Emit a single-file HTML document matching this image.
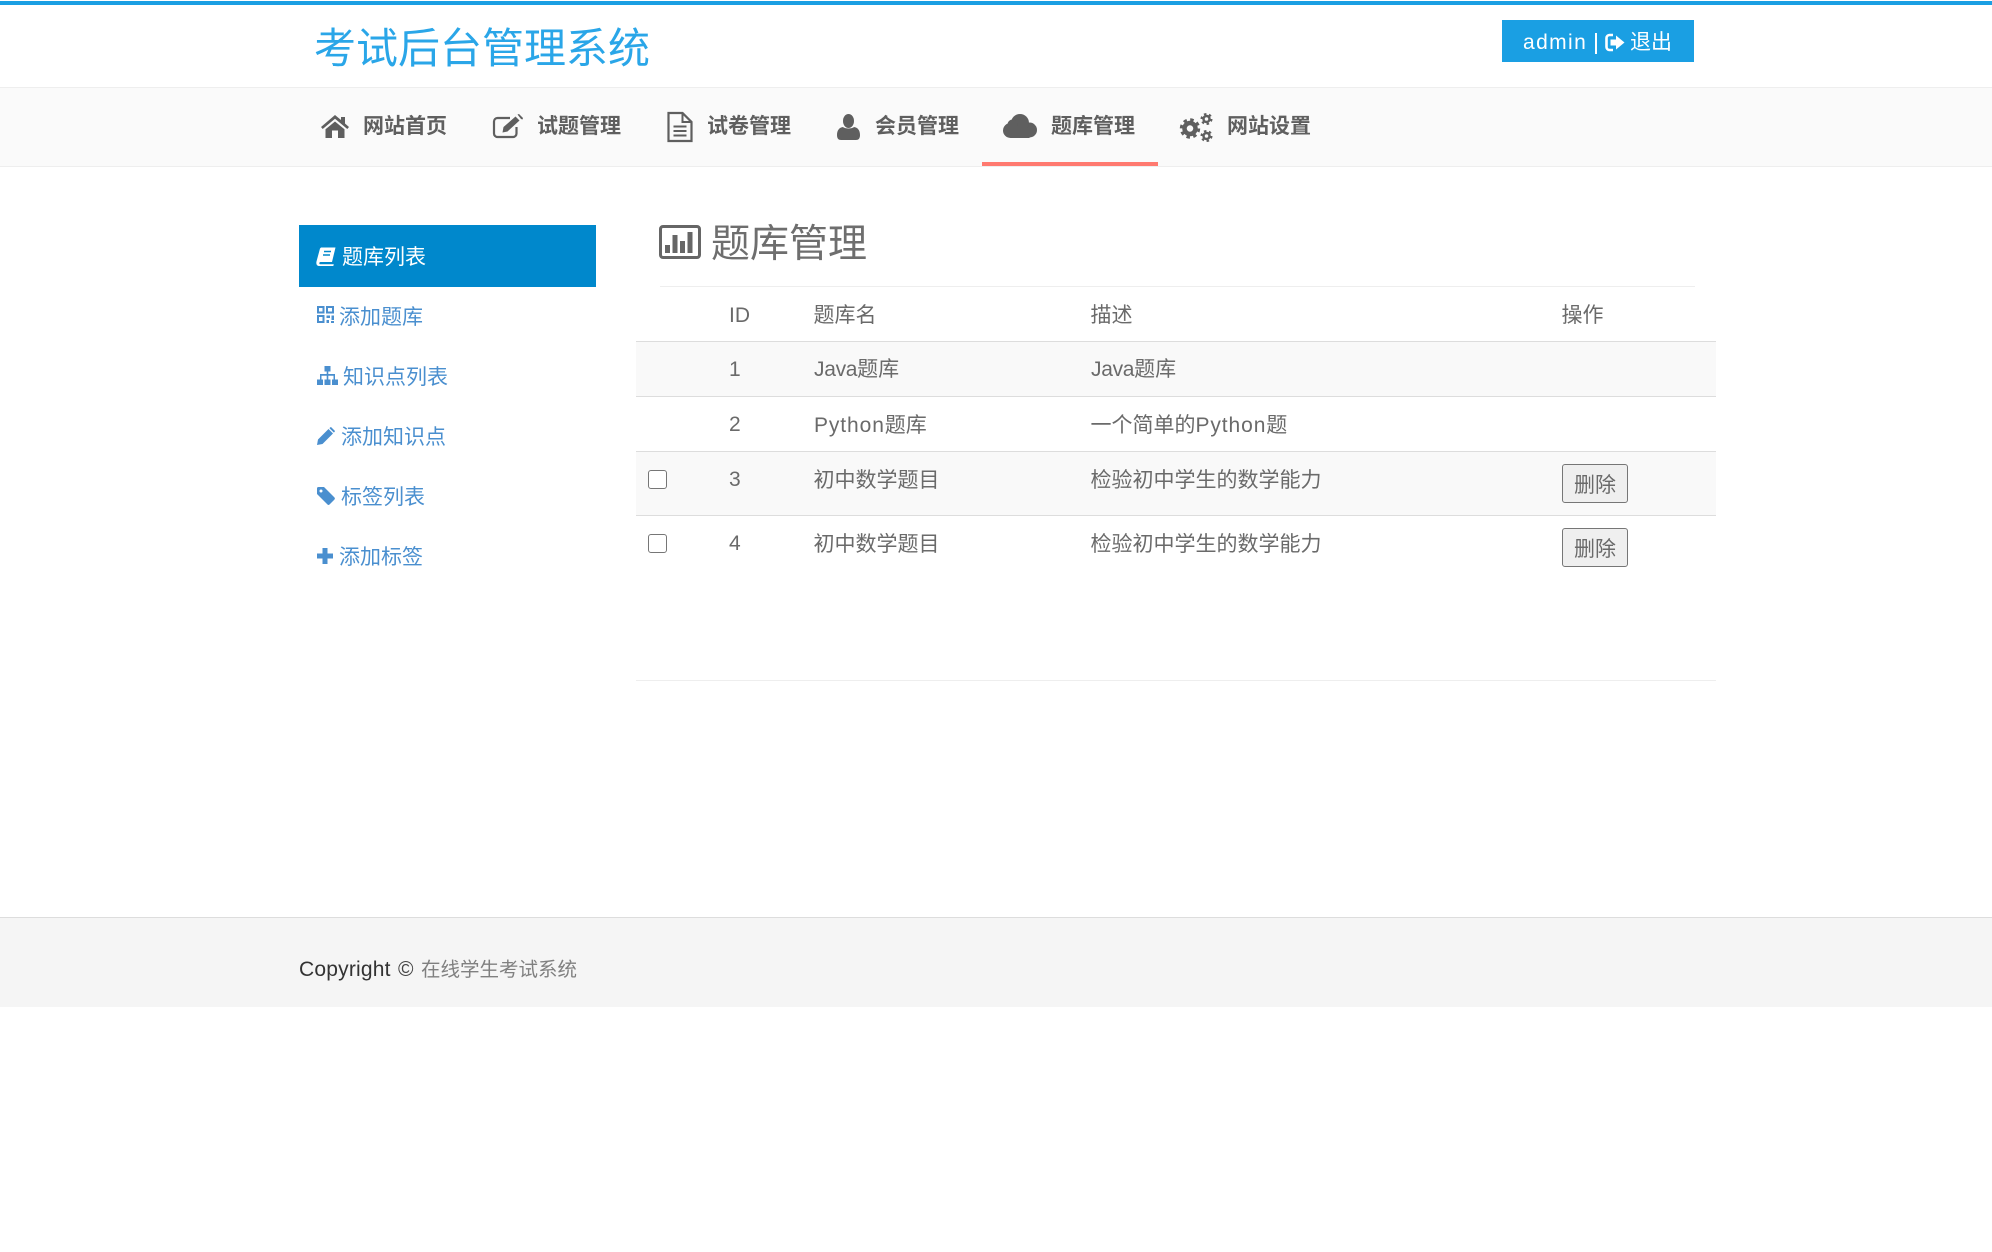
<!DOCTYPE html>
<html lang="zh-CN">
<head>
<meta charset="utf-8">
<title>考试后台管理系统</title>
<style>
html,body{margin:0;padding:0;background:#fff;}
body{position:relative;width:1992px;height:1252px;overflow:hidden;font-family:"Liberation Sans","Noto Sans CJK SC",sans-serif;font-size:21px;color:#6a6a6a;}
.a{position:absolute;}
.t{position:absolute;white-space:nowrap;line-height:30px;height:30px;}
.side{color:#4a8fcf;}
.nav{font-weight:bold;color:#5f5f5f;}
svg{position:absolute;display:block;overflow:visible;}
.cb{position:absolute;width:17px;height:17px;border:1.5px solid #767676;border-radius:3px;background:#fff;}
.btn{position:absolute;width:64px;height:37px;border:1.5px solid #767676;border-radius:3px;background:#efefef;color:#6a6a6a;line-height:41px;text-align:center;}
</style>
</head>
<body>
<div class="a" style="left:0;top:1px;width:1992px;height:4px;background:#1a9fe3;"></div>
<div class="t" style="left:314px;top:24px;height:50px;line-height:50px;font-size:42px;color:#2aa6e8;">考试后台管理系统</div>
<div class="a" style="left:1502px;top:20px;width:192px;height:42px;background:#1a9fe3;"></div>
<div class="t" style="left:1523px;top:28px;color:#fff;letter-spacing:1.400px;">admin</div>
<div class="a" style="left:1595px;top:33px;width:1.500px;height:21px;background:#fff;"></div>
<svg style="left:1605px;top:33px;" width="20" height="19" viewBox="0 0 20 19"><path d="M8 2H4.500A3 3 0 0 0 1.500 5V14A3 3 0 0 0 4.500 17H8" fill="none" stroke="#fff" stroke-width="2.600"/><path d="M11 2.500L19.500 9.500L11 16.500V12.500H5.500V6.500H11Z" fill="#fff"/></svg>
<div class="t" style="left:1630px;top:28px;color:#fff;">退出</div>

<div class="a" style="left:0;top:87px;width:1992px;height:80px;background:#fafafa;border-top:1px solid #eee;border-bottom:1px solid #eee;box-sizing:border-box;"></div>
<div class="a" style="left:982px;top:162px;width:176px;height:4px;background:#ff7a70;"></div>

<svg style="left:321px;top:115px;" width="28" height="23" viewBox="0 0 28 23"><path d="M14 0L20 5V2H24V8.500L28 12L26.300 14L14 3.800L1.700 14L0 12Z" fill="#5f5f5f"/><path d="M14 6.500L23.500 14.300V23H17V15.500H11V23H4.500V14.300Z" fill="#5f5f5f"/></svg>
<div class="t nav" style="left:363px;top:112px;">网站首页</div>

<svg style="left:493px;top:114px;" width="31" height="24" viewBox="0 0 31 24"><path d="M17 4H4.500A3.500 3.500 0 0 0 1 7.500V19.500A3.500 3.500 0 0 0 4.500 23H20A3.500 3.500 0 0 0 23.500 19.500V13" fill="none" stroke="#5f5f5f" stroke-width="2.200"/><path d="M9.500 18.500L10.500 13L22.500 2.500L26.500 6.500L14.500 17.500Z" fill="#5f5f5f"/><path d="M24.500 0.500L26 0L30 4L29.500 5.500L28 5Z" fill="#5f5f5f"/></svg>
<div class="t nav" style="left:537px;top:112px;">试题管理</div>

<svg style="left:667px;top:112px;" width="26" height="30" viewBox="0 0 26 30"><path d="M1.500 1H15.500L24.500 10V29H1.500Z" fill="none" stroke="#5f5f5f" stroke-width="2.200"/><path d="M15.500 1V10H24.500" fill="none" stroke="#5f5f5f" stroke-width="2"/><path d="M6.500 14.500H19.500M6.500 19H19.500M6.500 23.500H19.500" stroke="#5f5f5f" stroke-width="2"/></svg>
<div class="t nav" style="left:707px;top:112px;">试卷管理</div>

<svg style="left:836px;top:114px;" width="25" height="26" viewBox="0 0 25 26"><ellipse cx="12.500" cy="7" rx="5.500" ry="7" fill="#5f5f5f"/><path d="M1 21C1 16 3.500 13.500 7 13C9 15 16 15 18 13C21.500 13.500 24 16 24 21C24 24.500 22.500 26 20 26H5C2.500 26 1 24.500 1 21Z" fill="#5f5f5f"/></svg>
<div class="t nav" style="left:875px;top:112px;">会员管理</div>

<svg style="left:1003px;top:114px;" width="34" height="24" viewBox="0 0 34 24" fill="#5f5f5f"><circle cx="7.500" cy="16.500" r="7.500"/><circle cx="26.500" cy="16" r="7.500"/><circle cx="17" cy="9" r="9"/><circle cx="9.500" cy="10.500" r="5"/><rect x="7.500" y="14" width="19" height="10"/></svg>
<div class="t nav" style="left:1051px;top:112px;">题库管理</div>

<svg style="left:1180px;top:113px;" width="34" height="30" viewBox="0 0 34 30">
<circle cx="10" cy="15.500" r="5.500" fill="none" stroke="#5f5f5f" stroke-width="4.500"/>
<circle cx="10" cy="15.500" r="8.800" fill="none" stroke="#5f5f5f" stroke-width="2.800" stroke-dasharray="3.500 3.400"/>
<circle cx="26.500" cy="6" r="3" fill="none" stroke="#5f5f5f" stroke-width="2.500"/>
<circle cx="26.500" cy="6" r="5" fill="none" stroke="#5f5f5f" stroke-width="2" stroke-dasharray="2.500 2.700"/>
<circle cx="26.500" cy="23" r="3" fill="none" stroke="#5f5f5f" stroke-width="2.500"/>
<circle cx="26.500" cy="23" r="5" fill="none" stroke="#5f5f5f" stroke-width="2" stroke-dasharray="2.500 2.700"/>
</svg>
<div class="t nav" style="left:1227px;top:112px;">网站设置</div>

<!-- sidebar -->
<div class="a" style="left:299px;top:225px;width:297px;height:62px;background:#0088cc;"></div>
<svg style="left:316px;top:247px;" width="20" height="19" viewBox="0 0 20 19"><path d="M5 0.500H19.500L16 15H4.500C3 15 2.800 17.300 4.500 17.300H17.800L17.300 19H3.500C0.500 19 0 16.500 0.500 14.500L4 1.500Z" fill="#fff"/><path d="M8 4.500H15M7 8H14" stroke="#0088cc" stroke-width="1.600"/></svg>
<div class="t" style="left:342px;top:243px;color:#fff;">题库列表</div>

<svg style="left:317px;top:306px;" width="17" height="17" viewBox="0 0 17 17" fill="none" stroke="#4a8fcf"><rect x="1" y="1" width="5.500" height="5.500" stroke-width="2"/><rect x="10" y="1" width="6" height="5.500" stroke-width="2"/><rect x="1" y="10" width="5.500" height="6" stroke-width="2"/><path d="M9.500 9.500H13V12H9.500ZM14.500 9.500H17V14H14.500ZM9.500 14H12V17H9.500ZM14 15H17V17H14Z" fill="#4a8fcf" stroke="none"/></svg>
<div class="t side" style="left:339px;top:303px;">添加题库</div>

<svg style="left:317px;top:366px;" width="21" height="19" viewBox="0 0 21 19"><path d="M7.500 0H13.500V5.500H11.300V8H18V13.500H21V19H15V13.500H16.500V9.800H11.300V13.500H13.500V19H7.500V13.500H9.700V9.800H4.500V13.500H6V19H0V13.500H3V8H9.700V5.500H7.500Z" fill="#4a8fcf"/></svg>
<div class="t side" style="left:343px;top:363px;">知识点列表</div>

<svg style="left:317px;top:427px;" width="18" height="18" viewBox="0 0 18 18"><path d="M0 18L1 12.500L11.500 2L16 6.500L5.500 17Z" fill="#4a8fcf"/><path d="M13 0.500L14 0L18 4L17.500 5L16.800 5.500L12.500 1.200Z" fill="#4a8fcf"/></svg>
<div class="t side" style="left:341px;top:423px;">添加知识点</div>

<svg style="left:317px;top:487px;" width="18" height="18" viewBox="0 0 18 18"><path d="M0 1.500A1.500 1.500 0 0 1 1.500 0H7L17.500 10.500A1.500 1.500 0 0 1 17.500 12.500L12.500 17.500A1.500 1.500 0 0 1 10.500 17.500L0 7Z" fill="#4a8fcf"/><circle cx="4" cy="4" r="1.500" fill="#fff"/></svg>
<div class="t side" style="left:341px;top:483px;">标签列表</div>

<svg style="left:317px;top:548px;" width="16" height="16" viewBox="0 0 16 16"><path d="M5.500 0H10.500V5.500H16V10.500H10.500V16H5.500V10.500H0V5.500H5.500Z" fill="#4a8fcf"/></svg>
<div class="t side" style="left:339px;top:543px;">添加标签</div>

<!-- heading -->
<svg style="left:659px;top:225px;" width="42" height="34" viewBox="0 0 42 34"><rect x="1.500" y="1.500" width="39" height="31" rx="2.500" fill="none" stroke="#666" stroke-width="3"/><path d="M6 20H11V28H6ZM13.500 10H18.500V28H13.500ZM21 16H26V28H21ZM28.500 7H33.500V28H28.500Z" fill="#666"/></svg>
<div class="t" style="left:711px;top:220px;height:50px;line-height:50px;font-size:39px;color:#6e6e6e;">题库管理</div>
<div class="a" style="left:660px;top:286px;width:1035px;height:1px;background:#eee;"></div>

<!-- table -->
<div class="a" style="left:636px;top:342px;width:1080px;height:54px;background:#f9f9f9;"></div>
<div class="a" style="left:636px;top:452px;width:1080px;height:63px;background:#f9f9f9;"></div>
<div class="a" style="left:636px;top:341px;width:1080px;height:1px;background:#ddd;"></div>
<div class="a" style="left:636px;top:396px;width:1080px;height:1px;background:#ddd;"></div>
<div class="a" style="left:636px;top:451px;width:1080px;height:1px;background:#ddd;"></div>
<div class="a" style="left:636px;top:515px;width:1080px;height:1px;background:#ddd;"></div>
<div class="a" style="left:636px;top:680px;width:1080px;height:1px;background:#eee;"></div>

<div class="t" style="left:729px;top:301px;">ID</div>
<div class="t" style="left:813.500px;top:301px;">题库名</div>
<div class="t" style="left:1090.500px;top:301px;">描述</div>
<div class="t" style="left:1561.500px;top:301px;">操作</div>

<div class="t" style="left:729px;top:355px;">1</div>
<div class="t" style="left:814px;top:355px;"><span style="letter-spacing:-.3px">Java</span>题库</div>
<div class="t" style="left:1091px;top:355px;"><span style="letter-spacing:-.3px">Java</span>题库</div>

<div class="t" style="left:729px;top:410px;">2</div>
<div class="t" style="left:814px;top:411px;"><span style="letter-spacing:.9px">Python</span>题库</div>
<div class="t" style="left:1090.500px;top:411px;">一个简单的<span style="letter-spacing:.9px">Python</span>题</div>

<div class="cb" style="left:648px;top:470px;"></div>
<div class="t" style="left:729px;top:465px;">3</div>
<div class="t" style="left:813.500px;top:466px;">初中数学题目</div>
<div class="t" style="left:1090.500px;top:466px;">检验初中学生的数学能力</div>
<div class="btn" style="left:1562px;top:464px;">删除</div>

<div class="cb" style="left:648px;top:534px;"></div>
<div class="t" style="left:729px;top:529px;">4</div>
<div class="t" style="left:813.500px;top:530px;">初中数学题目</div>
<div class="t" style="left:1090.500px;top:530px;">检验初中学生的数学能力</div>
<div class="btn" style="left:1562px;top:528px;">删除</div>

<!-- footer -->
<div class="a" style="left:0;top:917px;width:1992px;height:90px;background:#f5f5f5;border-top:1px solid #ddd;box-sizing:border-box;"></div>
<div class="t" style="left:299px;top:955px;color:#333;letter-spacing:.2px;">Copyright</div>
<div class="t" style="left:398px;top:955px;color:#444;">©</div>
<div class="t" style="left:421px;top:955px;font-size:19.500px;color:#808080;">在线学生考试系统</div>
</body>
</html>
